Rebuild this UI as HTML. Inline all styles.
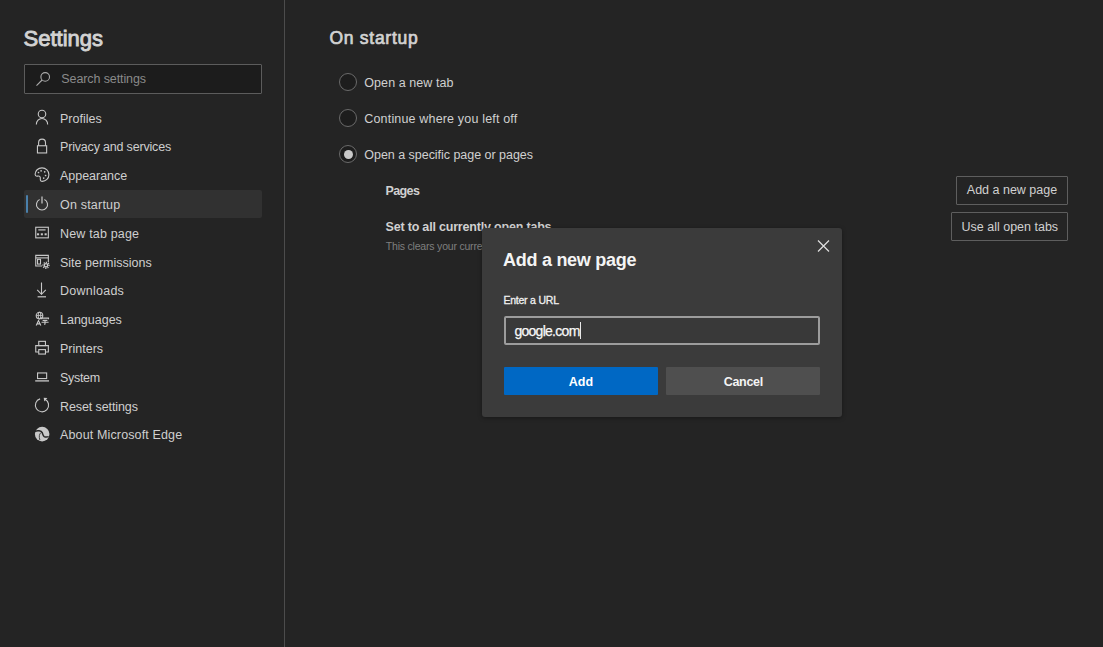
<!DOCTYPE html>
<html><head><meta charset="utf-8"><style>
html,body{margin:0;padding:0;}
body{width:1103px;height:647px;overflow:hidden;background:#242424;position:relative;font-family:"Liberation Sans",sans-serif;}
.t{position:absolute;white-space:nowrap;line-height:1;}
</style></head><body>
<div style="position:absolute;left:284px;top:0;width:1px;height:647px;background:#4c4c4c"></div>
<div class="t" style="left:23.50px;top:28.00px;font-size:22px;font-weight:400;color:#d2d2d2;letter-spacing:0px;-webkit-text-stroke:0.9px #d2d2d2;">Settings</div>
<div style="position:absolute;left:24px;top:64px;width:236px;height:28px;border:1px solid #5c5c5c;background:#1c1c1c;border-radius:1px"></div>
<svg style="position:absolute;left:30px;top:66px" width="26" height="26" viewBox="0 0 26 26"><circle cx="15.2" cy="10.9" r="4.3" fill="none" stroke="#ababab" stroke-width="1.1"/><line x1="12.1" y1="14" x2="6.5" y2="19.6" stroke="#ababab" stroke-width="1.1"/></svg>
<div class="t" style="left:61.30px;top:73.00px;font-size:12.5px;font-weight:400;color:#8a8a8a;letter-spacing:-0.1px;">Search settings</div>
<div style="position:absolute;left:24px;top:190px;width:238px;height:28px;background:#313131;border-radius:2px"></div>
<div style="position:absolute;left:26px;top:195px;width:2px;height:18px;background:#4a80ab;border-radius:1px"></div>
<div class="t" style="left:60.00px;top:113.00px;font-size:12.5px;font-weight:400;color:#cfcfcf;letter-spacing:0px;">Profiles</div>
<div class="t" style="left:60.00px;top:141.00px;font-size:12.5px;font-weight:400;color:#cfcfcf;letter-spacing:-0.18px;">Privacy and services</div>
<div class="t" style="left:60.00px;top:170.00px;font-size:12.5px;font-weight:400;color:#cfcfcf;letter-spacing:-0.03px;">Appearance</div>
<div class="t" style="left:60.00px;top:199.00px;font-size:12.5px;font-weight:400;color:#cfcfcf;letter-spacing:0.2px;">On startup</div>
<div class="t" style="left:60.00px;top:228.00px;font-size:12.5px;font-weight:400;color:#cfcfcf;letter-spacing:0.17px;">New tab page</div>
<div class="t" style="left:60.00px;top:257.00px;font-size:12.5px;font-weight:400;color:#cfcfcf;letter-spacing:0px;">Site permissions</div>
<div class="t" style="left:60.00px;top:285.00px;font-size:12.5px;font-weight:400;color:#cfcfcf;letter-spacing:0.25px;">Downloads</div>
<div class="t" style="left:60.00px;top:314.00px;font-size:12.5px;font-weight:400;color:#cfcfcf;letter-spacing:0px;">Languages</div>
<div class="t" style="left:60.00px;top:343.00px;font-size:12.5px;font-weight:400;color:#cfcfcf;letter-spacing:0px;">Printers</div>
<div class="t" style="left:60.00px;top:372.00px;font-size:12.5px;font-weight:400;color:#cfcfcf;letter-spacing:-0.3px;">System</div>
<div class="t" style="left:60.00px;top:401.00px;font-size:12.5px;font-weight:400;color:#cfcfcf;letter-spacing:-0.1px;">Reset settings</div>
<div class="t" style="left:60.00px;top:429.00px;font-size:12.5px;font-weight:400;color:#cfcfcf;letter-spacing:0.14px;">About Microsoft Edge</div>
<svg style="position:absolute;left:30px;top:106.40px" width="24" height="24" viewBox="0 0 24 24" fill="none" stroke="#c8c8c8" stroke-width="1.1"><circle cx="12" cy="7.95" r="3.75"/><path d="M6.35 18.4 A5.65 5.9 0 0 1 17.65 18.4"/></svg>
<svg style="position:absolute;left:30px;top:134.40px" width="24" height="24" viewBox="0 0 24 24" fill="none" stroke="#c8c8c8" stroke-width="1.1"><rect x="7.45" y="11.75" width="9.2" height="7.2"/><path d="M8.6 11.75 V8.6 A3.45 3.5 0 0 1 15.5 8.6 V11.75"/></svg>
<svg style="position:absolute;left:30px;top:163.40px" width="24" height="24" viewBox="0 0 24 24" fill="none" stroke="#c8c8c8" stroke-width="1.1"><path d="M12 4.9 C15.9 4.9 18.9 7.9 18.9 11.7 C18.9 15.5 15.8 18.4 12.3 18.4 C11 18.4 10.2 17.7 10.3 16.4 C10.4 15.3 10.6 14.2 9.7 13.4 C8.9 12.7 7.8 13.2 6.8 13.2 C5.7 13.2 5.1 12.3 5.1 11.3 C5.1 7.7 8.1 4.9 12 4.9 Z"/><g fill="#c8c8c8" stroke="none"><circle cx="8.5" cy="9.5" r="0.85"/><circle cx="11.1" cy="7.8" r="0.85"/><circle cx="14.7" cy="8.8" r="0.85"/><circle cx="15.6" cy="12.5" r="0.85"/><circle cx="13.7" cy="15.1" r="0.85"/></g></svg>
<svg style="position:absolute;left:30px;top:192.40px" width="24" height="24" viewBox="0 0 24 24" fill="none" stroke="#c8c8c8" stroke-width="1.1"><path d="M9.6 7.5 A5.55 5.55 0 1 0 14.4 7.5"/><line x1="12" y1="4.6" x2="12" y2="11.6" stroke-width="1.25"/></svg>
<svg style="position:absolute;left:30px;top:221.40px" width="24" height="24" viewBox="0 0 24 24" fill="none" stroke="#c8c8c8" stroke-width="1.1"><rect x="5.75" y="6.25" width="12.6" height="10.6"/><line x1="8.3" y1="8.9" x2="15.6" y2="8.9" stroke-width="1.2"/><g fill="#c8c8c8" stroke="none"><rect x="7" y="12.3" width="2.1" height="2"/><rect x="10.8" y="12.3" width="2.1" height="2"/><rect x="14.6" y="12.3" width="2.1" height="2"/></g></svg>
<svg style="position:absolute;left:30px;top:250.40px" width="24" height="24" viewBox="0 0 24 24" fill="none" stroke="#c8c8c8" stroke-width="1.1"><path d="M12 16.05 H5.75 V5.35 H18.35 V12.2"/><line x1="5.75" y1="7.9" x2="18.35" y2="7.9"/><rect x="7.55" y="9.35" width="2.95" height="4.7"/><circle cx="16" cy="15.3" r="3" stroke-width="1.3" stroke-dasharray="1.25 1.1" transform="rotate(-10 16 15.3)"/><circle cx="16" cy="15.3" r="1.7" stroke-width="1.3"/></svg>
<svg style="position:absolute;left:30px;top:278.40px" width="24" height="24" viewBox="0 0 24 24" fill="none" stroke="#c8c8c8" stroke-width="1.1"><line x1="11.5" y1="4.5" x2="11.5" y2="16.4"/><path d="M7.2 11.9 L11.5 16.3 L15.8 11.9"/><line x1="7.6" y1="18.8" x2="16" y2="18.8" stroke-width="1.2"/></svg>
<svg style="position:absolute;left:30px;top:307.40px" width="24" height="24" viewBox="0 0 24 24" fill="none" stroke="#c8c8c8" stroke-width="1.1"><circle cx="9.5" cy="8.6" r="3.3"/><ellipse cx="9.5" cy="8.6" rx="1.3" ry="3.3" stroke-width="0.9"/><line x1="6.2" y1="8.4" x2="12.8" y2="8.4" stroke-width="0.9"/><path d="M6.2 18.6 L8.5 13.6 L10.8 18.6 M7.1 16.9 H9.9"/><path d="M11.6 12.2 V11.1 H18.5 V12.2 M12.6 13.4 H17.4 M11.5 15.2 H18.6 M15 13.4 V17 L14 17.2"/></svg>
<svg style="position:absolute;left:30px;top:336.40px" width="24" height="24" viewBox="0 0 24 24" fill="none" stroke="#c8c8c8" stroke-width="1.1"><rect x="8.75" y="5.35" width="6.7" height="4.25"/><path d="M8.75 16.05 H5.75 V9.6 H18.35 V16.05 H15.45"/><rect x="8.75" y="13.6" width="6.7" height="4.45"/></svg>
<svg style="position:absolute;left:30px;top:365.40px" width="24" height="24" viewBox="0 0 24 24" fill="none" stroke="#c8c8c8" stroke-width="1.1"><rect x="7.55" y="7.95" width="9.1" height="5.6"/><line x1="5.2" y1="15.9" x2="19" y2="15.9" stroke-width="1.3"/></svg>
<svg style="position:absolute;left:30px;top:394.40px" width="24" height="24" viewBox="0 0 24 24" fill="none" stroke="#c8c8c8" stroke-width="1.1"><path d="M10.1 4.9 A6.6 6.6 0 1 0 14.9 5.3"/><path d="M13.7 3.7 L17.4 4.1 L14.3 7.4 Z" fill="#c8c8c8" stroke="none"/></svg>
<svg style="position:absolute;left:30px;top:422.40px" width="24" height="24" viewBox="0 0 24 24" fill="none" stroke="#c8c8c8" stroke-width="1.1"><circle cx="12.15" cy="12.1" r="7.3" fill="#c8c8c8" stroke="none"/><path d="M4.9 9.3 C7.5 8.4 11.2 8.6 12.2 10.6 C12.9 12 12.8 13.8 14.2 14.6 C15.5 15.2 17.2 15.1 18.7 14.6" stroke="#242424" stroke-width="1.5"/><path d="M10.9 10.6 C9.2 12.2 8.8 14.8 9.9 18" stroke="#242424" stroke-width="0.8"/></svg>
<div class="t" style="left:329.50px;top:30.00px;font-size:17.5px;font-weight:400;color:#d2d2d2;letter-spacing:0.72px;-webkit-text-stroke:0.7px #d2d2d2;">On startup</div>
<div style="position:absolute;left:339px;top:72.80px;width:16px;height:16px;border:1px solid #6a6a6a;border-radius:50%;background:#1d1d1d"></div>
<div class="t" style="left:364.30px;top:77.00px;font-size:12.5px;font-weight:400;color:#d0d0d0;letter-spacing:0.07px;">Open a new tab</div>
<div style="position:absolute;left:339px;top:108.90px;width:16px;height:16px;border:1px solid #6a6a6a;border-radius:50%;background:#1d1d1d"></div>
<div class="t" style="left:364.30px;top:113.00px;font-size:12.5px;font-weight:400;color:#d0d0d0;letter-spacing:0.17px;">Continue where you left off</div>
<div style="position:absolute;left:339px;top:144.90px;width:16px;height:16px;border:1px solid #6a6a6a;border-radius:50%;background:#1d1d1d"></div>
<div class="t" style="left:364.30px;top:149.00px;font-size:12.5px;font-weight:400;color:#d0d0d0;letter-spacing:-0.03px;">Open a specific page or pages</div>
<div style="position:absolute;left:343.7px;top:150.1px;width:9.2px;height:9.2px;border-radius:50%;background:#c9c9c9"></div>
<div class="t" style="left:385.50px;top:185.00px;font-size:12.5px;font-weight:700;color:#d0d0d0;letter-spacing:-0.6px;">Pages</div>
<div class="t" style="left:385.50px;top:221.00px;font-size:12.5px;font-weight:700;color:#d0d0d0;letter-spacing:-0.19px;">Set to all currently open tabs</div>
<div class="t" style="left:385.80px;top:241.00px;font-size:10.5px;font-weight:400;color:#7f7f7f;letter-spacing:-0.2px;">This clears your current pages</div>
<div style="position:absolute;left:956px;top:176px;width:110px;height:27px;border:1px solid #5e5e5e;border-radius:1px"></div>
<div class="t" style="left:966.80px;top:184.00px;font-size:12.5px;font-weight:400;color:#d0d0d0;letter-spacing:0px;">Add a new page</div>
<div style="position:absolute;left:951px;top:212px;width:115px;height:27px;border:1px solid #5e5e5e;border-radius:1px"></div>
<div class="t" style="left:961.50px;top:221.00px;font-size:12.5px;font-weight:400;color:#d0d0d0;letter-spacing:0px;">Use all open tabs</div>
<div style="position:absolute;left:482px;top:228px;width:360px;height:189px;background:#3b3b3b;border-radius:3px;box-shadow:0 1px 4px rgba(0,0,0,0.35)"></div>
<svg style="position:absolute;left:812px;top:234.6px" width="22" height="22" viewBox="0 0 22 22"><path d="M6 5.5 L17 16.5 M17 5.5 L6 16.5" stroke="#e0e0e0" stroke-width="1.2"/></svg>
<div class="t" style="left:503.00px;top:251.00px;font-size:18px;font-weight:700;color:#f4f4f4;letter-spacing:-0.27px;">Add a new page</div>
<div class="t" style="left:503.40px;top:295.00px;font-size:10.5px;font-weight:400;color:#f0f0f0;letter-spacing:-0.22px;-webkit-text-stroke:0.3px #f0f0f0;">Enter a URL</div>
<div style="position:absolute;left:504px;top:316px;width:312px;height:25px;border:2px solid #9c9c9c;background:#393939;border-radius:2px"></div>
<div class="t" style="left:514.40px;top:324.00px;font-size:14px;font-weight:400;color:#f8f8f8;letter-spacing:-0.72px;-webkit-text-stroke:0.25px #f8f8f8;">google.com</div>
<div style="position:absolute;left:580px;top:322px;width:1px;height:17px;background:#e8e8e8"></div>
<div style="position:absolute;left:504px;top:367px;width:154px;height:28px;background:#0068c4;border-radius:1px"></div>
<div class="t" style="left:568.80px;top:376.00px;font-size:12.5px;font-weight:700;color:#ffffff;letter-spacing:0px;">Add</div>
<div style="position:absolute;left:666px;top:367px;width:154px;height:28px;background:#4f4f4f;border-radius:1px"></div>
<div class="t" style="left:723.80px;top:376.00px;font-size:12.5px;font-weight:700;color:#f4f4f4;letter-spacing:-0.33px;">Cancel</div>
</body></html>
